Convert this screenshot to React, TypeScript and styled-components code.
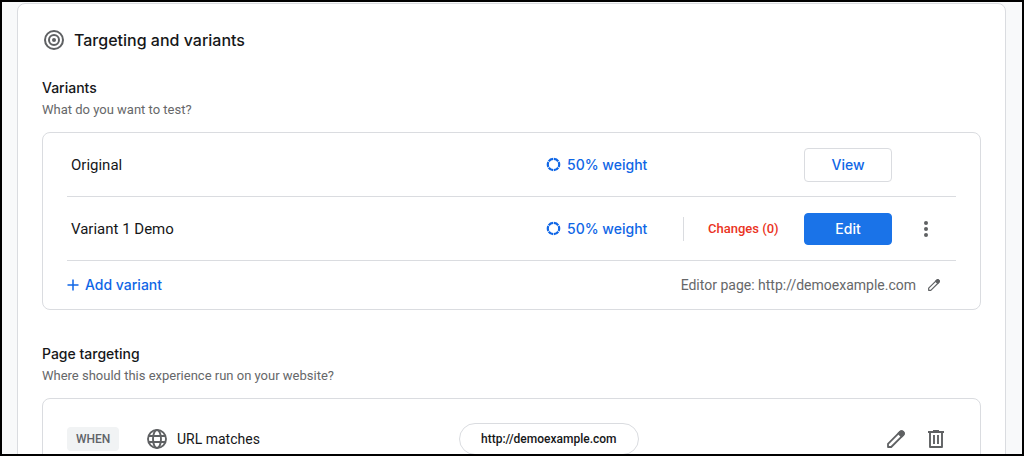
import React from "react";
import styled, { createGlobalStyle, css } from "styled-components";

const GlobalStyle = createGlobalStyle`
  *, *::before, *::after { box-sizing: border-box; }
  body { margin: 0; font-family: Roboto, sans-serif; color: #161719; background: #f8f9fa; }
  h1, h2, p { margin: 0; }
  button { font: inherit; cursor: pointer; }
  svg { display: block; flex: none; }
`;

const brand = `Inter, Roboto, sans-serif`;
const link = "#0f66e6";
const muted = "#666769";
const line = "#dadce0";

const Frame = styled.div`
  height: 100vh;
  overflow: hidden;
  border: 2px solid #000;
  padding: 1px 16px 0 15px;
  background: #f8f9fa;
`;

const Card = styled.main`
  min-height: 100vh;
  padding: 24px;
  border: 1px solid ${line};
  border-radius: 8px;
  background: #fff;
`;

const CardHeader = styled.header`
  display: flex;
  align-items: center;
  gap: 8px;
  height: 24px;
  margin-bottom: 24px;
`;

const Title = styled.h1`
  font: 500 16px/24px ${brand};
`;

const Section = styled.section`
  margin-bottom: 32px;
`;

const SectionTitle = styled.h2`
  font: 500 14px/24px ${brand};
`;

const Hint = styled.p`
  margin-bottom: 12px;
  font-size: 13px;
  line-height: 20px;
  color: ${muted};
`;

const Panel = styled.div`
  padding: 0 24px;
  border: 1px solid ${line};
  border-radius: 8px;
`;

const VariantRow = styled.div`
  display: grid;
  grid-template-columns: 1fr 137px 121px 88px 64px;
  align-items: center;
  height: 64px;
  border-bottom: 1px solid ${line};
`;

const VariantName = styled.span`
  padding-left: 4px;
  font-size: 15px;
`;

const TextButton = styled.button`
  display: flex;
  align-items: center;
  gap: 6px;
  padding: 0;
  border: 0;
  background: none;
  color: ${link};
  font: 500 14px/24px ${brand};
`;

const Changes = styled.span`
  height: 24px;
  padding-left: 24px;
  border-left: 1px solid ${line};
  font-size: 13px;
  font-weight: 500;
  line-height: 24px;
  color: #ea3323;
`;

const ActionButton = styled.button<{ $primary?: boolean }>`
  grid-column: 4;
  height: 34px;
  padding: 0;
  border: 1px solid ${line};
  border-radius: 4px;
  background: #fff;
  color: ${link};
  font: 500 14px/24px ${brand};
  ${(p) =>
    p.$primary &&
    css`
      height: 32px;
      border-color: #1a73e8;
      background: #1a73e8;
      color: #fff;
    `}
`;

const IconButton = styled.button`
  display: flex;
  justify-content: center;
  padding: 0;
  border: 0;
  background: none;
  color: #5f6163;
`;

const MenuButton = styled(IconButton)`
  padding-left: 4px;
`;

const PanelFooter = styled.div`
  display: flex;
  align-items: center;
  justify-content: space-between;
  height: 48px;
`;

const EditorPage = styled.div`
  display: flex;
  align-items: center;
  gap: 12px;
  padding-right: 16px;
  font-size: 14px;
  color: ${muted};
`;

const RuleRow = styled.div`
  display: grid;
  grid-template-columns: 80px 312px 1fr auto;
  align-items: center;
  height: 80px;
`;

const WhenChip = styled.span`
  justify-self: start;
  padding: 0 9px;
  border-radius: 4px;
  background: #f1f3f4;
  color: #5f6368;
  font-size: 12px;
  font-weight: 500;
  line-height: 24px;
`;

const RuleName = styled.span`
  display: flex;
  align-items: center;
  gap: 10px;
  font-size: 14px;
`;

const UrlPill = styled.span`
  justify-self: start;
  padding: 0 21px;
  border: 1px solid ${line};
  border-radius: 16px;
  font-size: 12px;
  font-weight: 500;
  line-height: 30px;
`;

const RuleActions = styled.div`
  display: flex;
  align-items: center;
  gap: 21px;
  padding-right: 10px;
`;

const TargetIcon = () => (
  <svg width="24" height="24" viewBox="0 0 24 24" fill="none" stroke="#5f6163" strokeWidth="2" aria-hidden="true">
    <circle cx="12" cy="12" r="9" />
    <circle cx="12" cy="12" r="5" />
    <circle cx="12" cy="12" r="2" fill="#5f6163" stroke="none" />
  </svg>
);

const WeightIcon = () => (
  <svg width="15" height="15" viewBox="0 0 15 15" fill="none" stroke={link} strokeWidth="2.2" aria-hidden="true">
    <circle cx="7.5" cy="7.5" r="5.7" pathLength="60" strokeDasharray="8.7 1.3" strokeDashoffset="-0.65" transform="rotate(-90 7.5 7.5)" />
  </svg>
);

const PlusIcon = () => (
  <svg width="12" height="12" viewBox="0 0 12 12" stroke={link} strokeWidth="1.5" aria-hidden="true">
    <path d="M6 .5v11M.5 6h11" />
  </svg>
);

const PencilIcon = ({ size }: { size: number }) => (
  <svg width={size} height={size} viewBox="0 0 18 18" fill="none" stroke="currentColor" strokeWidth="1.8" strokeLinejoin="round" aria-hidden="true">
    <path d="M1 17v-3.2L13.2 1.6a1.9 1.9 0 0 1 2.7 0l.5.5a1.9 1.9 0 0 1 0 2.7L4.2 17z" />
    <path d="M11.4 3.4l3.2 3.2 1.8-1.8a1.9 1.9 0 0 0 0-2.7l-.5-.5a1.9 1.9 0 0 0-2.7 0z" fill="currentColor" />
  </svg>
);

const TrashIcon = () => (
  <svg width="20" height="20" viewBox="0 0 20 20" fill="none" stroke="currentColor" strokeWidth="1.9" strokeLinejoin="round" aria-hidden="true">
    <path d="M2 3h16M7 2h6M4 3v15h12V3M8 6v9M12 6v9" />
  </svg>
);

const MoreIcon = () => (
  <svg width="4" height="16" viewBox="0 0 4 16" fill="currentColor" aria-hidden="true">
    <circle cx="2" cy="2" r="2" />
    <circle cx="2" cy="8" r="2" />
    <circle cx="2" cy="14" r="2" />
  </svg>
);

const GlobeIcon = () => (
  <svg width="20" height="20" viewBox="0 0 20 20" fill="none" stroke="#5f6163" strokeWidth="1.9" aria-hidden="true">
    <circle cx="10" cy="10" r="9" />
    <ellipse cx="10" cy="10" rx="4" ry="9" />
    <path d="M1.6 7h16.8M1.6 13h16.8" />
  </svg>
);

const variants = [
  { name: "Original", weight: 50 },
  { name: "Variant 1 Demo", weight: 50, changes: 0 },
];

export default function App() {
  return (
    <Frame>
      <GlobalStyle />
      <Card>
        <CardHeader>
          <TargetIcon />
          <Title>Targeting and variants</Title>
        </CardHeader>

        <Section>
          <SectionTitle>Variants</SectionTitle>
          <Hint>What do you want to test?</Hint>
          <Panel>
            {variants.map((v) => {
              const editable = v.changes !== undefined;
              return (
                <VariantRow key={v.name}>
                  <VariantName>{v.name}</VariantName>
                  <TextButton type="button">
                    <WeightIcon />
                    {`${v.weight}% weight`}
                  </TextButton>
                  {editable && <Changes>{`Changes (${v.changes})`}</Changes>}
                  <ActionButton type="button" $primary={editable}>
                    {editable ? "Edit" : "View"}
                  </ActionButton>
                  {editable && (
                    <MenuButton type="button" aria-label="More options">
                      <MoreIcon />
                    </MenuButton>
                  )}
                </VariantRow>
              );
            })}
            <PanelFooter>
              <TextButton type="button">
                <PlusIcon />
                Add variant
              </TextButton>
              <EditorPage>
                Editor page: http://demoexample.com
                <IconButton type="button" aria-label="Edit editor page">
                  <PencilIcon size={12} />
                </IconButton>
              </EditorPage>
            </PanelFooter>
          </Panel>
        </Section>

        <Section>
          <SectionTitle>Page targeting</SectionTitle>
          <Hint>Where should this experience run on your website?</Hint>
          <Panel>
            <RuleRow>
              <WhenChip>WHEN</WhenChip>
              <RuleName>
                <GlobeIcon />
                URL matches
              </RuleName>
              <UrlPill>http://demoexample.com</UrlPill>
              <RuleActions>
                <IconButton type="button" aria-label="Edit rule">
                  <PencilIcon size={18} />
                </IconButton>
                <IconButton type="button" aria-label="Delete rule">
                  <TrashIcon />
                </IconButton>
              </RuleActions>
            </RuleRow>
          </Panel>
        </Section>
      </Card>
    </Frame>
  );
}
